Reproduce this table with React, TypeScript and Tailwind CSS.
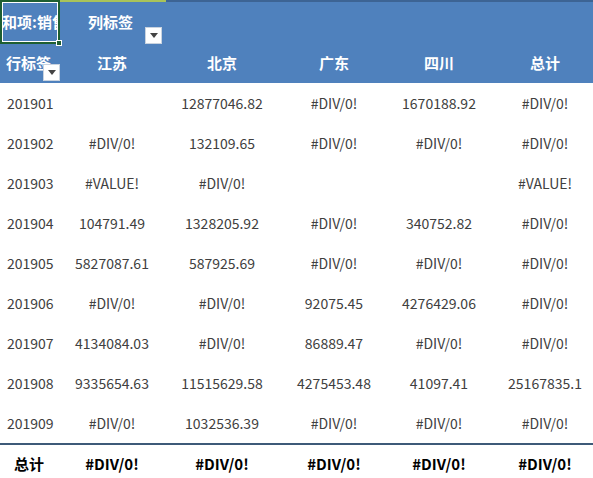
import React from "react";

const cols = ["江苏", "北京", "广东", "四川", "总计"];
const widths = ["w-[108px]", "w-[112px]", "w-[112px]", "w-[98px]", "w-[114px]"];

const rows: [string, string[]][] = [
  ["201901", ["", "12877046.82", "#DIV/0!", "1670188.92", "#DIV/0!"]],
  ["201902", ["#DIV/0!", "132109.65", "#DIV/0!", "#DIV/0!", "#DIV/0!"]],
  ["201903", ["#VALUE!", "#DIV/0!", "", "", "#VALUE!"]],
  ["201904", ["104791.49", "1328205.92", "#DIV/0!", "340752.82", "#DIV/0!"]],
  ["201905", ["5827087.61", "587925.69", "#DIV/0!", "#DIV/0!", "#DIV/0!"]],
  ["201906", ["#DIV/0!", "#DIV/0!", "92075.45", "4276429.06", "#DIV/0!"]],
  ["201907", ["4134084.03", "#DIV/0!", "86889.47", "#DIV/0!", "#DIV/0!"]],
  ["201908", ["9335654.63", "11515629.58", "4275453.48", "41097.41", "25167835.1"]],
  ["201909", ["#DIV/0!", "1032536.39", "#DIV/0!", "#DIV/0!", "#DIV/0!"]],
];

const font = { fontFamily: '"Noto Sans CJK SC", "Noto Sans", sans-serif' };

const Dropdown = () => (
  <div className="w-[17px] h-[17px] bg-white border border-[#c9d3df] flex items-center justify-center">
    <svg width="8" height="5" viewBox="0 0 8 5">
      <path d="M0 0 L8 0 L4 5 Z" fill="#444" />
    </svg>
  </div>
);

const App = () => {
  return (
    <div className="w-[593px] h-[478px] overflow-hidden bg-white" style={font}>
      <div className="w-[602px]">
        {/* header */}
        <div className="bg-[#4f81bd] text-white text-[15px]">
          <div className="flex h-[44px] border-t-2 border-[#3d6494] relative">
            <div className="absolute left-[60px] top-[-2px] w-[106px] h-[2px] bg-[#a9c35a]" />
            <div className="w-[60px] h-[44px] mt-[-2px] border-2 border-[#1e5f32] relative">
              <div className="h-full border border-white overflow-hidden flex items-center">
                <span className="whitespace-nowrap ml-[-16px] font-bold">求和项:销售额</span>
              </div>
              <div className="absolute right-[-4px] bottom-[-4px] w-[6px] h-[6px] bg-[#1e5f32] border border-white" />
            </div>
            <div className="flex items-start pl-[28px] pt-[9px] gap-[12px]">
              <span className="font-bold">列标签</span>
              <div className="mt-[16px]">
                <Dropdown />
              </div>
            </div>
          </div>
          <div className="flex h-[39px] items-center font-bold">
            <div className="w-[58px] pl-[6px] relative h-full flex items-center">
              <span>行标签</span>
              <div className="absolute left-[43px] top-[20px]">
                <Dropdown />
              </div>
            </div>
            {cols.map((c, i) => (
              <div key={c} className={`${widths[i]} text-center`}>
                {c}
              </div>
            ))}
          </div>
        </div>
        {/* body */}
        <div className="text-[14px] text-[#404040]">
          {rows.map(([label, vals]) => (
            <div key={label} className="flex h-[40px] items-center">
              <div className="w-[58px] pl-[7px]">{label}</div>
              {vals.map((v, i) => (
                <div key={i} className={`${widths[i]} text-center`}>
                  {v}
                </div>
              ))}
            </div>
          ))}
          <div className="flex h-[40px] items-center border-t-2 border-[#3d5a78] font-bold text-black text-[15px]">
            <div className="w-[58px] pl-[14px]">总计</div>
            {cols.map((_, i) => (
              <div key={i} className={`${widths[i]} text-center`}>
                #DIV/0!
              </div>
            ))}
          </div>
        </div>
      </div>
    </div>
  );
};

export default App;
